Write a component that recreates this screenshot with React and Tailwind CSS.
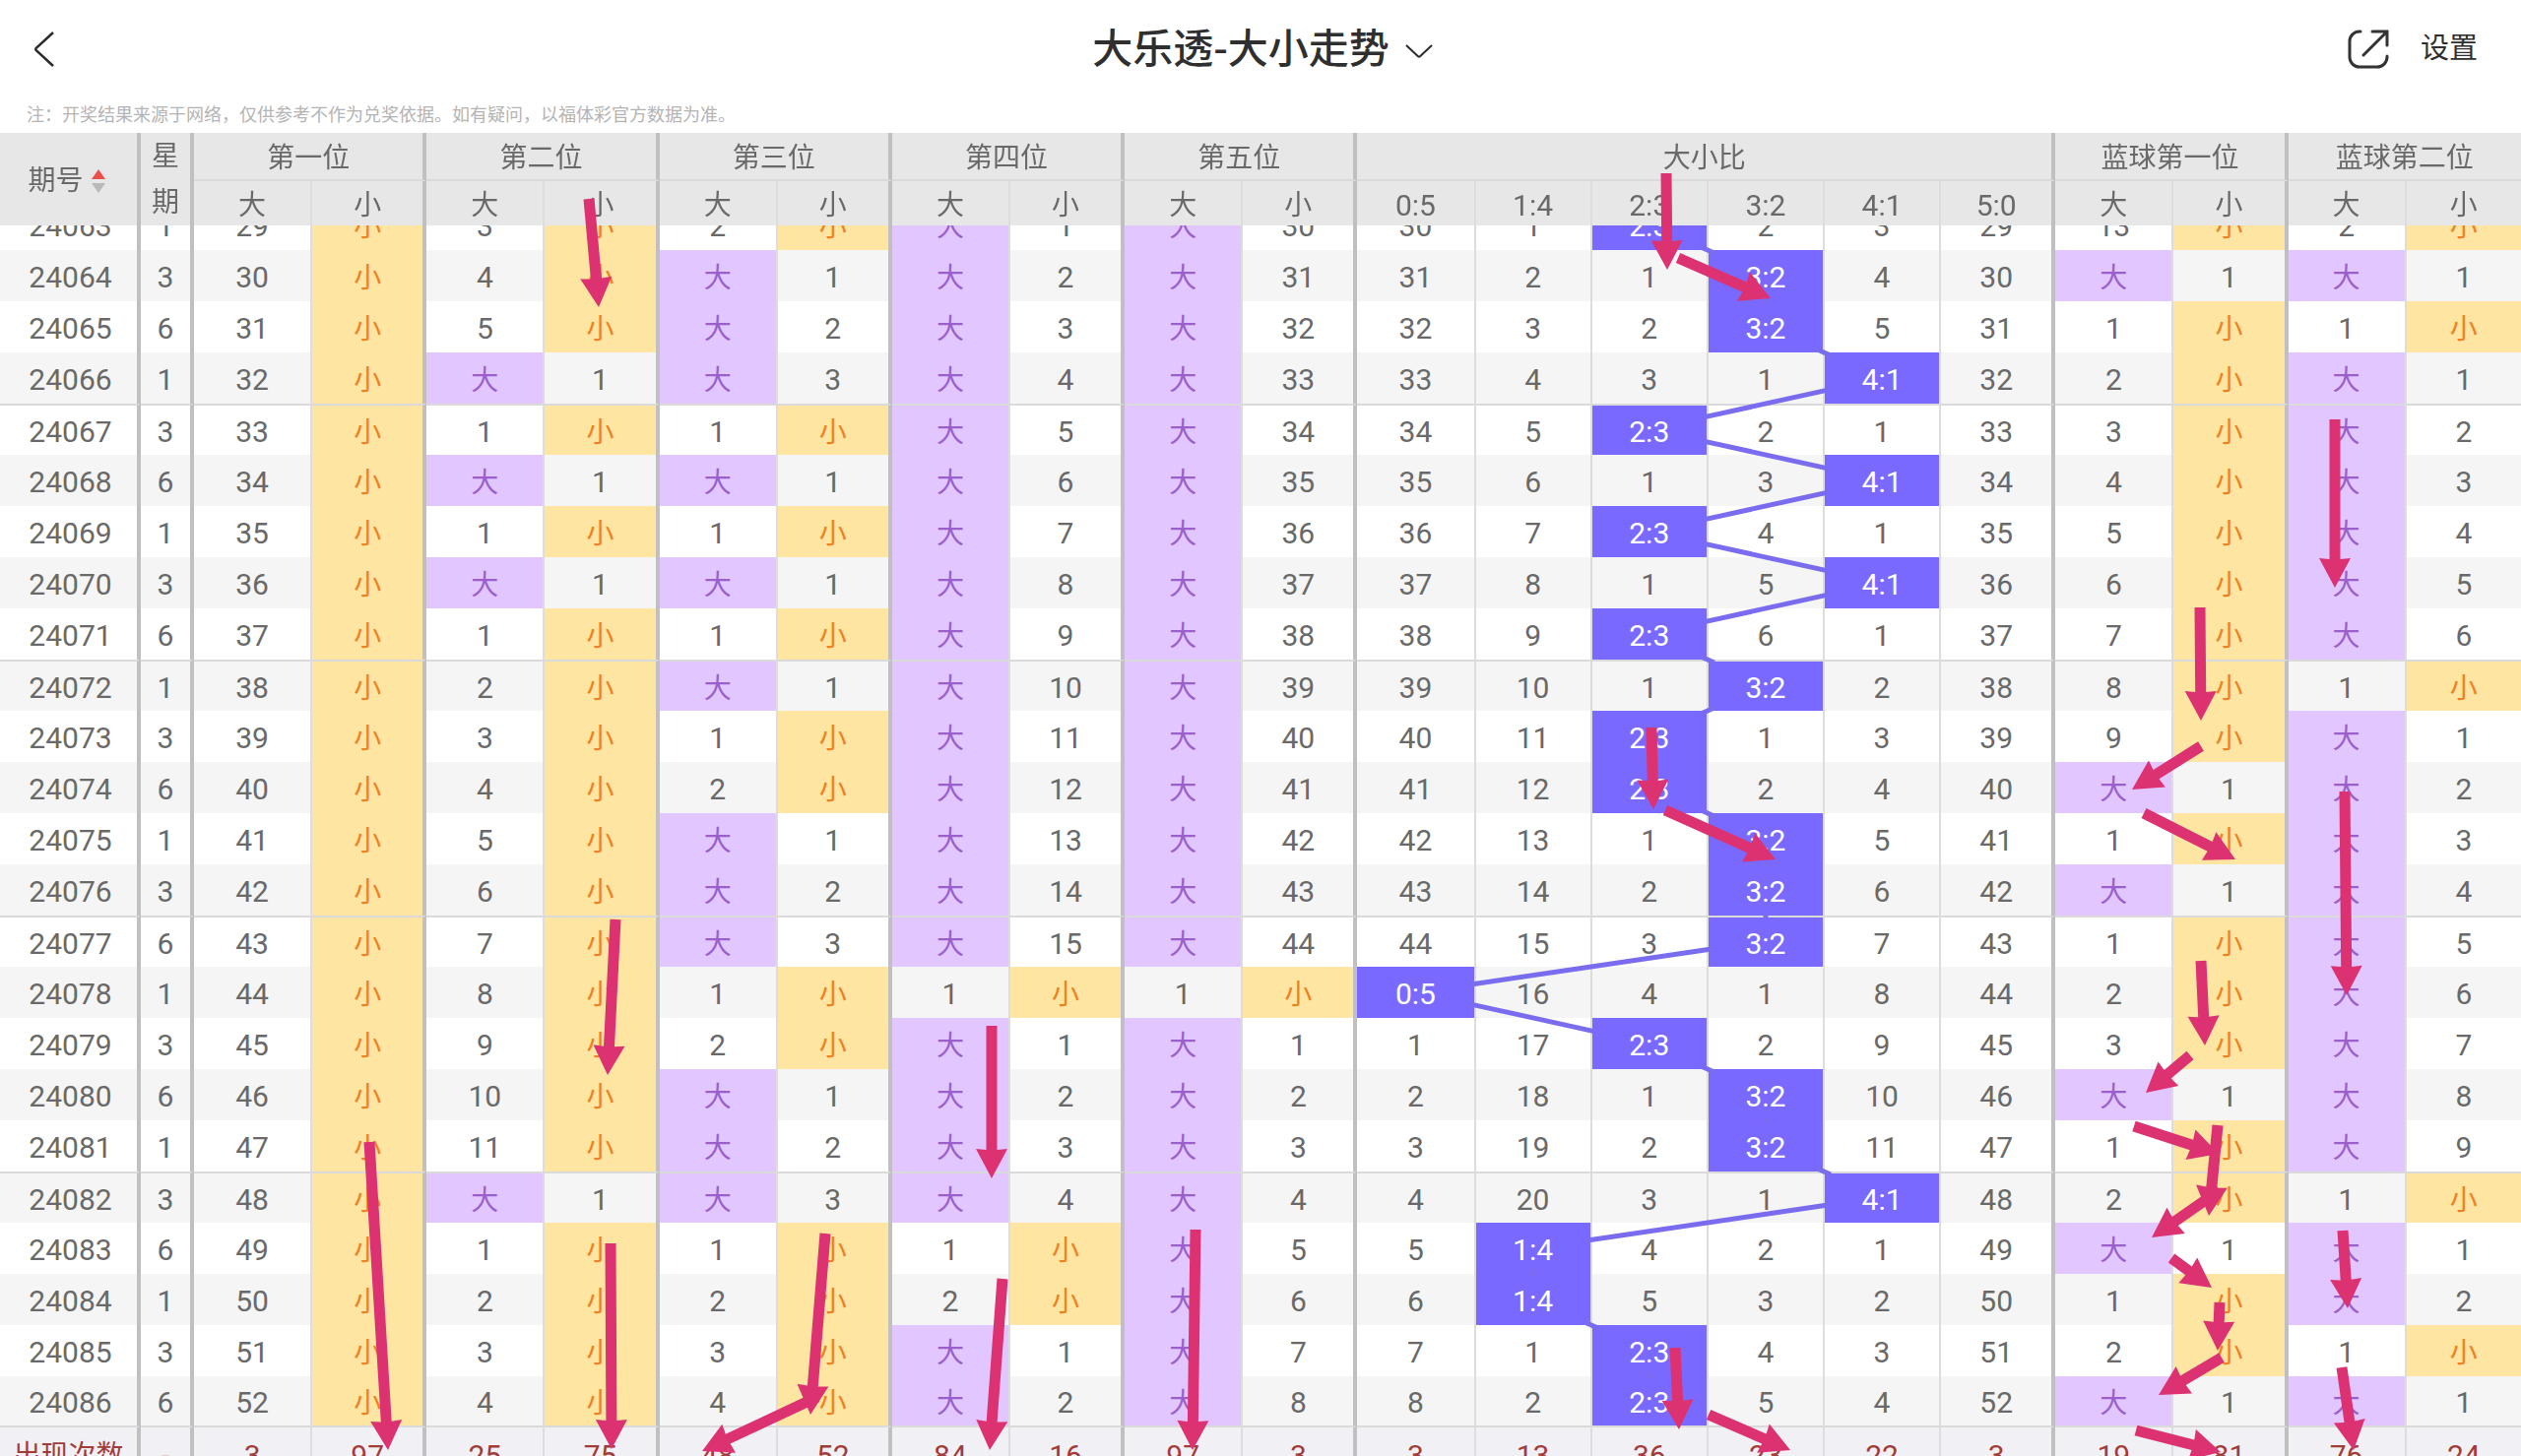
import React, { useLayoutEffect, useRef } from "react";

const RATIOS = ["0:5", "1:4", "2:3", "3:2", "4:1", "5:0"];

const GROUPS = [
  { title: "第一位", cols: ["大", "小"] },
  { title: "第二位", cols: ["大", "小"] },
  { title: "第三位", cols: ["大", "小"] },
  { title: "第四位", cols: ["大", "小"] },
  { title: "第五位", cols: ["大", "小"] },
  { title: "大小比", cols: RATIOS },
  { title: "蓝球第一位", cols: ["大", "小"] },
  { title: "蓝球第二位", cols: ["大", "小"] },
];

// issue, weekday, then one value per column
const ROWS = [
  "24063 1 29 小 3 小 2 小 大 1 大 30 30 1 2:3 2 3 29 13 小 2 小",
  "24064 3 30 小 4 小 大 1 大 2 大 31 31 2 1 3:2 4 30 大 1 大 1",
  "24065 6 31 小 5 小 大 2 大 3 大 32 32 3 2 3:2 5 31 1 小 1 小",
  "24066 1 32 小 大 1 大 3 大 4 大 33 33 4 3 1 4:1 32 2 小 大 1",
  "24067 3 33 小 1 小 1 小 大 5 大 34 34 5 2:3 2 1 33 3 小 大 2",
  "24068 6 34 小 大 1 大 1 大 6 大 35 35 6 1 3 4:1 34 4 小 大 3",
  "24069 1 35 小 1 小 1 小 大 7 大 36 36 7 2:3 4 1 35 5 小 大 4",
  "24070 3 36 小 大 1 大 1 大 8 大 37 37 8 1 5 4:1 36 6 小 大 5",
  "24071 6 37 小 1 小 1 小 大 9 大 38 38 9 2:3 6 1 37 7 小 大 6",
  "24072 1 38 小 2 小 大 1 大 10 大 39 39 10 1 3:2 2 38 8 小 1 小",
  "24073 3 39 小 3 小 1 小 大 11 大 40 40 11 2:3 1 3 39 9 小 大 1",
  "24074 6 40 小 4 小 2 小 大 12 大 41 41 12 2:3 2 4 40 大 1 大 2",
  "24075 1 41 小 5 小 大 1 大 13 大 42 42 13 1 3:2 5 41 1 小 大 3",
  "24076 3 42 小 6 小 大 2 大 14 大 43 43 14 2 3:2 6 42 大 1 大 4",
  "24077 6 43 小 7 小 大 3 大 15 大 44 44 15 3 3:2 7 43 1 小 大 5",
  "24078 1 44 小 8 小 1 小 1 小 1 小 0:5 16 4 1 8 44 2 小 大 6",
  "24079 3 45 小 9 小 2 小 大 1 大 1 1 17 2:3 2 9 45 3 小 大 7",
  "24080 6 46 小 10 小 大 1 大 2 大 2 2 18 1 3:2 10 46 大 1 大 8",
  "24081 1 47 小 11 小 大 2 大 3 大 3 3 19 2 3:2 11 47 1 小 大 9",
  "24082 3 48 小 大 1 大 3 大 4 大 4 4 20 3 1 4:1 48 2 小 1 小",
  "24083 6 49 小 1 小 1 小 1 小 大 5 5 1:4 4 2 1 49 大 1 大 1",
  "24084 1 50 小 2 小 2 小 2 小 大 6 6 1:4 5 3 2 50 1 小 大 2",
  "24085 3 51 小 3 小 3 小 大 1 大 7 7 1 2:3 4 3 51 2 小 1 小",
  "24086 6 52 小 4 小 4 小 大 2 大 8 8 2 2:3 5 4 52 大 1 大 1",
].map((line) => line.split(" "));

const TOTALS = "3 97 25 75 48 52 84 16 97 3 3 13 36 23 22 3 19 81 76 24".split(" ");

// [tail x, tail y, tip x, tip y]
const ARROWS = [
  [598, 202, 608, 312],
  [1692, 176, 1693, 274],
  [1704, 262, 1798, 303],
  [375, 1160, 394, 1473],
  [620, 1263, 621, 1472],
  [838, 1253, 823, 1437],
  [830, 1419, 713, 1474],
  [1677, 739, 1679, 822],
  [1691, 823, 1803, 873],
  [625, 934, 617, 1092],
  [1007, 1042, 1007, 1197],
  [1018, 1299, 1005, 1473],
  [1214, 1249, 1211, 1473],
  [1701, 1369, 1705, 1452],
  [1735, 1437, 1818, 1473],
  [2371, 426, 2371, 597],
  [2234, 617, 2235, 732],
  [2235, 758, 2165, 802],
  [2177, 826, 2270, 873],
  [2381, 804, 2383, 1011],
  [2235, 976, 2239, 1062],
  [2224, 1072, 2179, 1110],
  [2167, 1144, 2253, 1172],
  [2252, 1143, 2243, 1235],
  [2254, 1209, 2185, 1257],
  [2205, 1278, 2246, 1308],
  [2254, 1323, 2252, 1372],
  [2256, 1379, 2192, 1417],
  [2169, 1453, 2255, 1475],
  [2379, 1250, 2384, 1329],
  [2378, 1389, 2390, 1473],
];

const HEAD_HEIGHT = 94;
const ROW_HEIGHT = 52;
const FIRST_COLS = 197;
const COL_WIDTH = (2560 - FIRST_COLS) / 20;
const SCROLL_START = 27;

const isGroupEnd = (i) => (i < 9 ? i % 2 === 1 : i === 9 || i === 15 || i === 17);
const isGroupStart = (i) => (i < 10 ? i % 2 === 0 : i === 10 || i === 16 || i === 18);

function columnBorder(i) {
  if (isGroupEnd(i)) return "border-l-2 border-l-[#dddddd] border-r-4 border-r-[#c0c0c0]";
  if (isGroupStart(i)) return "";
  return "border-l-2 border-l-[#dddddd]";
}

function cellColor(value) {
  if (value === "大") return "bg-[#e2c6ff] text-[#9a5fca]";
  if (value === "小") return "bg-[#ffe5a2] text-[#ee8122]";
  if (value.includes(":")) return "bg-[#7a69ff] text-white";
  return "";
}

function arrowPoints([x1, y1, x2, y2]) {
  const length = Math.hypot(x2 - x1, y2 - y1);
  const ux = (x2 - x1) / length;
  const uy = (y2 - y1) / length;
  const point = (along, side) =>
    `${(x1 + ux * along - uy * side).toFixed(1)},${(y1 + uy * along + ux * side).toFixed(1)}`;
  const neck = length - 29;
  return [
    point(0, -5.5),
    point(neck, -5.5),
    point(neck - 1, -16),
    point(length, 0),
    point(neck - 1, 16),
    point(neck, 5.5),
    point(0, 5.5),
  ].join(" ");
}

export default function App() {
  const scroller = useRef(null);

  useLayoutEffect(() => {
    scroller.current.scrollTop = SCROLL_START;
  }, []);

  return (
    <div className="relative flex h-screen flex-col overflow-hidden bg-white font-[Roboto,'Noto_Sans_CJK_SC',sans-serif]">
      <TopBar />
      <p className="h-10 px-[27px] font-['Noto_Sans_CJK_SC',sans-serif] text-lg leading-10 text-[#b4b4b4]">
        注：开奖结果来源于网络，仅供参考不作为兑奖依据。如有疑问，以福体彩官方数据为准。
      </p>
      <div ref={scroller} className="min-h-0 flex-1 overflow-auto [scrollbar-width:none]">
        <div className="relative">
          <TrendTable />
          <RatioLines />
        </div>
      </div>
      <Arrows />
    </div>
  );
}

function TopBar() {
  return (
    <header className="grid h-[95px] grid-cols-[1fr_auto_1fr] items-center px-8 font-['Noto_Sans_CJK_SC',sans-serif] text-[#2f2f2f]">
      <button aria-label="返回" className="justify-self-start pt-1">
        <svg width="26" height="38" viewBox="0 0 26 38" fill="none" stroke="#2b2b2b" strokeWidth="2.5">
          <path d="M22 2 4.5 18.2q-.8.8 0 1.6L22 36" />
        </svg>
      </button>
      <button className="flex items-center gap-4 pl-1">
        <h1 className="pb-1 text-[41px] leading-[60px] font-medium">大乐透-大小走势</h1>
        <svg className="mt-2" width="28" height="14" viewBox="0 0 28 14" fill="none" stroke="#2b2b2b" strokeWidth="2">
          <path d="M1 1 13 12.2q1 .8 2 0L27 1" />
        </svg>
      </button>
      <div className="flex items-center gap-8 justify-self-end pr-3">
        <button aria-label="分享" className="pt-1">
          <svg width="42" height="42" viewBox="0 0 42 42" fill="none" stroke="#333333" strokeWidth="3" strokeLinecap="round">
            <path d="M13 3h-1a10 10 0 0 0-10 10v16a10 10 0 0 0 10 10h18a10 10 0 0 0 10-10v-1" />
            <path d="M25 3h15v14M40 3 16 27" />
          </svg>
        </button>
        <button className="pb-1 text-[29px] leading-10">设置</button>
      </div>
    </header>
  );
}

function TrendTable() {
  return (
    <table className="w-full table-fixed border-separate border-spacing-0 text-center text-[30px] leading-10 text-[#696969]">
      <colgroup>
        <col className="w-[143px]" />
        <col className="w-[54px]" />
        {TOTALS.map((_, i) => (
          <col key={i} />
        ))}
      </colgroup>
      <thead className="sticky top-0 z-30 bg-[#e7e7e7] text-[28px]">
        <tr>
          <th rowSpan={2} className="border-r-4 border-[#c0c0c0] p-0 pt-1 font-normal">
            <button className="flex w-full items-center justify-center gap-2 pr-1">
              期号
              <svg width="14" height="24" viewBox="0 0 14 24">
                <path d="M7 0 14 10H0z" fill="#ea4f4b" />
                <path d="M7 24 0 14h14z" fill="#b9b9b9" />
              </svg>
            </button>
          </th>
          <th rowSpan={2} className="border-r-4 border-[#c0c0c0] p-0 leading-[47px] font-normal">
            星<br />期
          </th>
          {GROUPS.map((group, i) => (
            <th
              key={group.title}
              colSpan={group.cols.length}
              className={`h-[49px] border-b-2 border-b-[#dadada] p-0 pt-1 font-normal ${
                i < GROUPS.length - 1 ? "border-r-4 border-r-[#c0c0c0]" : ""
              }`}
            >
              {group.title}
            </th>
          ))}
        </tr>
        <tr>
          {GROUPS.flatMap((group) => group.cols).map((label, i) => (
            <th
              key={i}
              className={`h-[45px] p-0 pt-1 font-normal ${label.includes(":") ? "text-[30px]" : ""} ${columnBorder(i)}`}
            >
              {label}
            </th>
          ))}
        </tr>
      </thead>
      <tbody>
        {ROWS.map(([issue, day, ...values], r) => {
          let line = "";
          if (r > 0 && issue % 5 === 2) line = "border-t-2 border-t-[#dadada]";
          if (r === ROWS.length - 1) line = "border-b-2 border-b-[#dadada]";
          return (
            <tr key={issue} className={issue % 2 ? "bg-white" : "bg-[#f5f5f5]"}>
              <td className={`h-[52px] border-r-4 border-r-[#c0c0c0] p-0 pt-1 pl-1 ${line}`}>{issue}</td>
              <td className={`border-r-4 border-r-[#c0c0c0] p-0 pt-1 ${line}`}>{day}</td>
              {values.map((value, i) => (
                <td key={i} className={`p-0 pt-1 ${columnBorder(i)} ${line} ${cellColor(value)}`}>
                  {value === "大" || value === "小" ? <span className="text-[28px]">{value}</span> : value}
                </td>
              ))}
            </tr>
          );
        })}
      </tbody>
      <tfoot className="bg-[#f1f0f5] text-[#a33b39]">
        <tr>
          <th className="h-[58px] border-r-4 border-r-[#c0c0c0] p-0 text-[28px] font-normal">出现次数</th>
          <td className="border-r-4 border-r-[#c0c0c0] p-0">-</td>
          {TOTALS.map((total, i) => (
            <td key={i} className={`p-0 ${columnBorder(i)}`}>
              {total}
            </td>
          ))}
        </tr>
      </tfoot>
    </table>
  );
}

function RatioLines() {
  const points = ROWS.map((row, r) => {
    const col = row.slice(12, 18).findIndex((value) => value.includes(":"));
    return [FIRST_COLS + COL_WIDTH * (10.5 + col) + 1, HEAD_HEIGHT + ROW_HEIGHT * (r + 0.5)];
  });

  // each segment runs between the edges of its two cells, clear of their text
  const segments = points.slice(1).map(([x2, y2], i) => {
    const [x1, y1] = points[i];
    const dx = x2 - x1;
    const dy = y2 - y1;
    const t = Math.min(dx ? 55 / Math.abs(dx) : 1, 23 / dy);
    return { x1: x1 + dx * t, y1: y1 + dy * t, x2: x2 - dx * t, y2: y2 - dy * t };
  });

  return (
    <svg
      className="pointer-events-none absolute top-0 left-0 z-10 h-[1342px] w-full"
      viewBox="0 0 2560 1342"
      preserveAspectRatio="none"
    >
      {segments.map((segment, i) => (
        <line key={i} {...segment} stroke="#7a6cee" strokeWidth="5" />
      ))}
    </svg>
  );
}

function Arrows() {
  return (
    <svg
      className="pointer-events-none absolute inset-0 z-40 h-full w-full"
      viewBox="0 0 2560 1479"
      preserveAspectRatio="none"
    >
      {ARROWS.map((arrow, i) => (
        <polygon key={i} points={arrowPoints(arrow)} fill="#dc3272" />
      ))}
    </svg>
  );
}
